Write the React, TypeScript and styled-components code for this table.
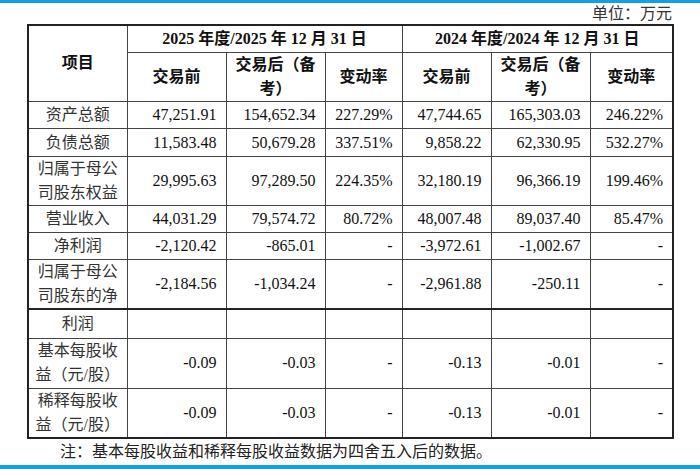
import styled, { createGlobalStyle } from "styled-components";

const GlobalStyle = createGlobalStyle`
  html, body {
    margin: 0;
    padding: 0;
    background: #ffffff;
  }
  body {
    font-family: "Liberation Serif", "Noto Sans CJK SC", serif;
    color: #1a1a1a;
  }
`;

const Page = styled.div`
  width: 700px;
  height: 469px;
  display: flex;
  flex-direction: column;
  overflow: hidden;
`;

const TopBar = styled.div`
  height: 3px;
  background-color: #12a0e4;
`;

const Sheet = styled.div`
  flex: 1;
  padding-left: 27px;
  width: 645px;
`;

const UnitLine = styled.div`
  height: 21px;
  line-height: 22px;
  font-size: 16px;
  text-align: right;
  color: #333;
`;

const Table = styled.table`
  border-collapse: collapse;
  table-layout: fixed;
  width: 645px;
  border: 2px solid #222;
  font-size: 16px;
`;

interface RowProps {
  h: number;
  thickTop?: boolean;
}

const Row = styled.tr<RowProps>`
  height: ${(p) => p.h}px;
  ${(p) => (p.thickTop ? "border-top: 2px solid #222;" : "")}
`;

const HeadCell = styled.th`
  border: 1px solid #444;
  padding: 0 4px;
  font-weight: 700;
  font-size: 16px;
  line-height: 24px;
  text-align: center;
  color: #111;
`;

const LabelCell = styled.td`
  border: 1px solid #444;
  padding: 0 4px;
  line-height: 24px;
  text-align: center;
  color: #333;
`;

const NumCell = styled.td`
  border: 1px solid #444;
  padding: 0 9px 0 0;
  line-height: 24px;
  text-align: right;
  color: #111;
  white-space: nowrap;
`;

const Note = styled.div`
  height: 26px;
  line-height: 26px;
  font-size: 16px;
  text-indent: 33px;
  color: #222;
`;

const BottomBar = styled.div`
  height: 5px;
  background-color: #12a0e4;
`;

const widths = [99, 99, 99, 77, 89, 99, 83];

type DataRow = {
  label: string[];
  values: string[];
  h: number;
  thickTop?: boolean;
};

const rows: DataRow[] = [
  { label: ["资产总额"], h: 27, values: ["47,251.91", "154,652.34", "227.29%", "47,744.65", "165,303.03", "246.22%"] },
  { label: ["负债总额"], h: 28, values: ["11,583.48", "50,679.28", "337.51%", "9,858.22", "62,330.95", "532.27%"] },
  { label: ["归属于母公", "司股东权益"], h: 49, values: ["29,995.63", "97,289.50", "224.35%", "32,180.19", "96,366.19", "199.46%"] },
  { label: ["营业收入"], h: 27, values: ["44,031.29", "79,574.72", "80.72%", "48,007.48", "89,037.40", "85.47%"] },
  { label: ["净利润"], h: 27, values: ["-2,120.42", "-865.01", "-", "-3,972.61", "-1,002.67", "-"] },
  { label: ["归属于母公", "司股东的净"], h: 48, values: ["-2,184.56", "-1,034.24", "-", "-2,961.88", "-250.11", "-"] },
  { label: ["利润"], h: 29, thickTop: true, values: ["", "", "", "", "", ""] },
  { label: ["基本每股收", "益（元/股）"], h: 50, values: ["-0.09", "-0.03", "-", "-0.13", "-0.01", "-"] },
  { label: ["稀释每股收", "益（元/股）"], h: 49, values: ["-0.09", "-0.03", "-", "-0.13", "-0.01", "-"] },
];

const subHeads = [["交易前"], ["交易后（备", "考）"], ["变动率"]];

function Lines({ parts }: { parts: string[] }) {
  return (
    <>
      {parts.map((t, i) => (
        <span key={i}>
          {i > 0 && <br />}
          {t}
        </span>
      ))}
    </>
  );
}

function App() {
  return (
    <Page>
      <GlobalStyle />
      <TopBar />
      <Sheet>
        <UnitLine>单位：万元</UnitLine>
        <Table>
          <colgroup>
            {widths.map((w, i) => (
              <col key={i} style={{ width: w }} />
            ))}
          </colgroup>
          <thead>
            <Row h={28}>
              <HeadCell rowSpan={2}>项目</HeadCell>
              <HeadCell colSpan={3}>2025 年度/2025 年 12 月 31 日</HeadCell>
              <HeadCell colSpan={3}>2024 年度/2024 年 12 月 31 日</HeadCell>
            </Row>
            <Row h={49}>
              {[...subHeads, ...subHeads].map((s, i) => (
                <HeadCell key={i}>
                  <Lines parts={s} />
                </HeadCell>
              ))}
            </Row>
          </thead>
          <tbody>
            {rows.map((r, i) => (
              <Row key={i} h={r.h} thickTop={r.thickTop}>
                <LabelCell>
                  <Lines parts={r.label} />
                </LabelCell>
                {r.values.map((v, j) => (
                  <NumCell key={j}>{v}</NumCell>
                ))}
              </Row>
            ))}
          </tbody>
        </Table>
        <Note>注：基本每股收益和稀释每股收益数据为四舍五入后的数据。</Note>
      </Sheet>
      <BottomBar />
    </Page>
  );
}

export default App;
